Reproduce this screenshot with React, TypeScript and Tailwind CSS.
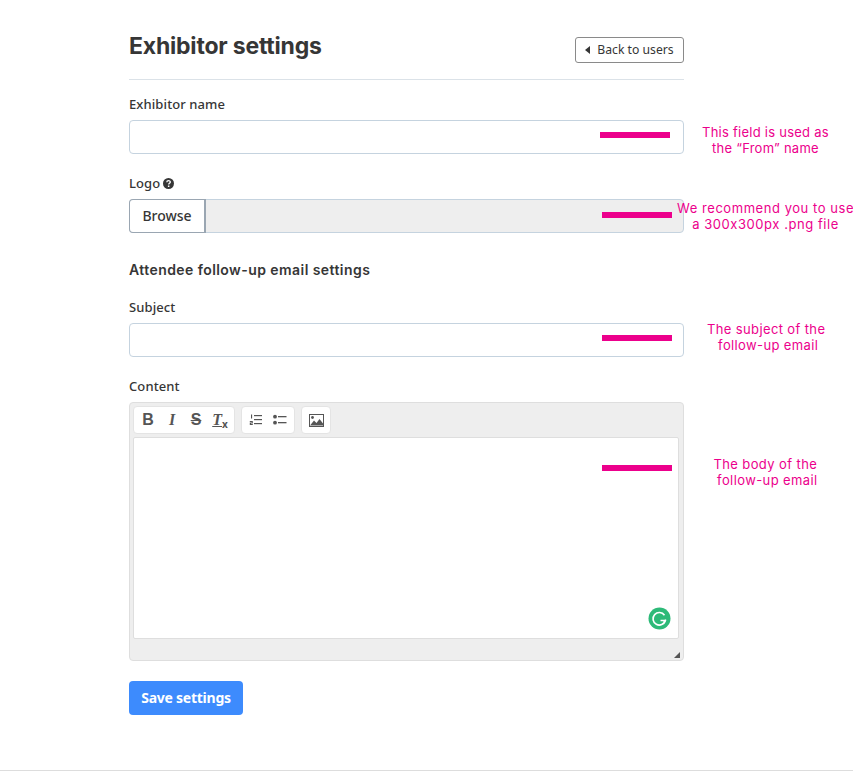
import React from "react";

const Bar = ({ className }: { className: string }) => (
  <div className={"absolute h-[5.5px] w-[70px] bg-[#ec008c] " + className} />
);

const Note = ({ className, children }: { className: string; children: React.ReactNode }) => (
  <div className={"absolute text-center text-[13px] leading-[16px] text-[#ec008c] font-['Inter',sans-serif] whitespace-pre " + className}>
    {children}
  </div>
);

const Label = ({ children }: { children: React.ReactNode }) => (
  <div className="text-[13px] leading-[18px] font-medium tracking-[0.1px] text-[#363636]">{children}</div>
);

const ToolGroup = ({ children }: { children: React.ReactNode }) => (
  <div className="flex h-[28px] items-center rounded-[4px] border border-[#e4e4e4] bg-white px-[2px]">{children}</div>
);

const Btn = ({ children }: { children: React.ReactNode }) => (
  <div className="flex h-[26px] w-[24px] items-center justify-center">{children}</div>
);

export default function App() {
  return (
    <div className="relative h-[775px] w-[853px] overflow-hidden bg-white font-['Noto_Sans',sans-serif]">
      <div className="ml-[129px] w-[555px] pt-[29px]">
        <div className="flex h-[51px] items-start justify-between border-b border-[#dbe2e8]">
          <h1 className="mt-[1px] text-[23px] leading-[33px] font-bold tracking-[-0.2px] text-[#363636] font-['Inter',sans-serif]">Exhibitor settings</h1>
          <div className="mt-[8px] flex h-[26px] w-[109px] items-center justify-center gap-[7px] rounded-[3px] border border-[#8a8a8a] bg-white text-[12.2px] text-[#363636]">
            <svg width="5" height="8" viewBox="0 0 5 8"><path d="M5 0v8L0 4z" fill="#363636" /></svg>
            Back to users
          </div>
        </div>

        <div className="mt-[15px]"><Label>Exhibitor name</Label></div>
        <div className="mt-[7px] h-[34px] rounded-[4px] border border-[#c5d3df] bg-white" />

        <div className="mt-[20px] flex items-center gap-[3px]">
          <Label>Logo</Label>
          <svg width="11" height="11" viewBox="0 0 11 11">
            <circle cx="5.5" cy="5.5" r="5.5" fill="#363636" />
            <path d="M3.8 4.2c0-2.1 3.5-2.1 3.5-.1 0 1.2-1.6 1.2-1.6 2.4" stroke="#fff" strokeWidth="1.3" fill="none" />
            <rect x="4.9" y="7.5" width="1.5" height="1.5" fill="#fff" />
          </svg>
        </div>
        <div className="mt-[7px] flex h-[34px] rounded-[4px] border border-[#c5d3df] bg-[#eeeeee]">
          <div className="-m-px flex h-[34px] w-[77px] items-center justify-center rounded-l-[4px] border border-r-2 border-[#9aa6b2] bg-white pb-[1px] text-[14px] font-medium text-[#363636]">Browse</div>
        </div>

        <h2 className="mt-[28px] text-[14px] leading-[18px] font-semibold tracking-[0.43px] text-[#363636] font-['Inter',sans-serif]">Attendee follow-up email settings</h2>

        <div className="mt-[19px]"><Label>Subject</Label></div>
        <div className="mt-[7px] h-[34px] rounded-[4px] border border-[#c5d3df] bg-white" />

        <div className="mt-[20px]"><Label>Content</Label></div>
        <div className="mt-[7px] flex h-[259px] flex-col rounded-[4px] border border-[#dedede] bg-[#eeeeee] pt-[3px] pr-[4px] pl-[3px]">
          <div className="flex gap-[6px]">
            <ToolGroup>
              <Btn>
                <span className="text-[16px] leading-none font-bold text-[#555] font-['Liberation_Sans',sans-serif]">B</span>
              </Btn>
              <Btn>
                <span className="text-[16px] leading-none font-bold italic text-[#555] font-['Liberation_Serif',serif]">I</span>
              </Btn>
              <Btn>
                <span className="text-[16px] leading-none font-bold text-[#555] line-through font-['Liberation_Sans',sans-serif]">S</span>
              </Btn>
              <Btn>
                <span className="text-[16px] leading-none font-bold italic text-[#555] underline font-['Liberation_Serif',serif]">T</span>
                <span className="mt-[8px] text-[10px] leading-none font-bold text-[#555]">x</span>
              </Btn>
            </ToolGroup>
            <ToolGroup>
              <Btn>
                <svg width="14" height="12" viewBox="0 0 14 12" fill="#555">
                  <rect x="5" y="1" width="8" height="1.2" /><rect x="5" y="5" width="8" height="1.2" /><rect x="5" y="9" width="8" height="1.2" />
                  <rect x="2" y="0.5" width="1.1" height="4" />
                  <path d="M0.8 7h3v2.4H2v.7h1.8v1H0.8V8.6h2V8h-2z" />
                </svg>
              </Btn>
              <Btn>
                <svg width="14" height="12" viewBox="0 0 14 12" fill="#555">
                  <rect x="5" y="2" width="8.5" height="1.3" /><rect x="5" y="8" width="8.5" height="1.3" />
                  <circle cx="2" cy="2.7" r="1.9" /><circle cx="2" cy="8.7" r="1.9" />
                </svg>
              </Btn>
            </ToolGroup>
            <ToolGroup>
              <Btn>
                <svg width="15" height="13" viewBox="0 0 15 13">
                  <rect x="0.5" y="0.5" width="14" height="12" fill="#fff" stroke="#555" />
                  <circle cx="3.5" cy="3.5" r="1.4" fill="#555" />
                  <path d="M1 11.5 5 6.5l2.5 2.5 3-4 3.5 4.5v2z" fill="#555" />
                </svg>
              </Btn>
            </ToolGroup>
          </div>
          <div className="relative mt-[3px] h-[202px] rounded-[2px] border border-[#dedede] bg-white">
            <svg className="absolute right-[7px] bottom-[8px]" width="23" height="23" viewBox="0 0 23 23">
              <circle cx="11.5" cy="11.5" r="11" fill="#2dba78" />
              <path d="M16.5 8.2A6.3 6.3 0 1 0 17.4 13.5H12.5" stroke="#fff" strokeWidth="1.6" fill="none" />
              <path d="M17.5 11.8v3.4h-2.6z" fill="#fff" />
            </svg>
          </div>
          <div className="relative flex-1">
            <div className="absolute right-[-1px] bottom-[2px] h-0 w-0 border-b-[6px] border-l-[6px] border-b-[#555] border-l-transparent" />
          </div>
        </div>

        <div className="mt-[20px] flex h-[34px] w-[114px] items-center justify-center rounded-[4px] bg-[#3d8bfd] pb-[1px] text-[14px] font-bold tracking-[-0.25px] text-white">Save settings</div>
      </div>

      <div className="absolute top-[770px] left-0 h-px w-full bg-[#dddddd]" />

      <Bar className="top-[132px] left-[600px]" />
      <Bar className="top-[212px] left-[602px]" />
      <Bar className="top-[335px] left-[602px]" />
      <Bar className="top-[465px] left-[602px]" />

      <Note className="top-[124px] left-[702px] tracking-[0.25px]">{"This field is used as\nthe “From” name"}</Note>
      <Note className="top-[200px] left-[677px] tracking-[0.55px]">{"We recommend you to use\na 300x300px .png file"}</Note>
      <Note className="top-[321px] left-[707px] tracking-[0.37px]">{"The subject of the\n follow-up email"}</Note>
      <Note className="top-[456px] left-[713px] tracking-[0.4px]">{"The body of the\n follow-up email"}</Note>
    </div>
  );
}
